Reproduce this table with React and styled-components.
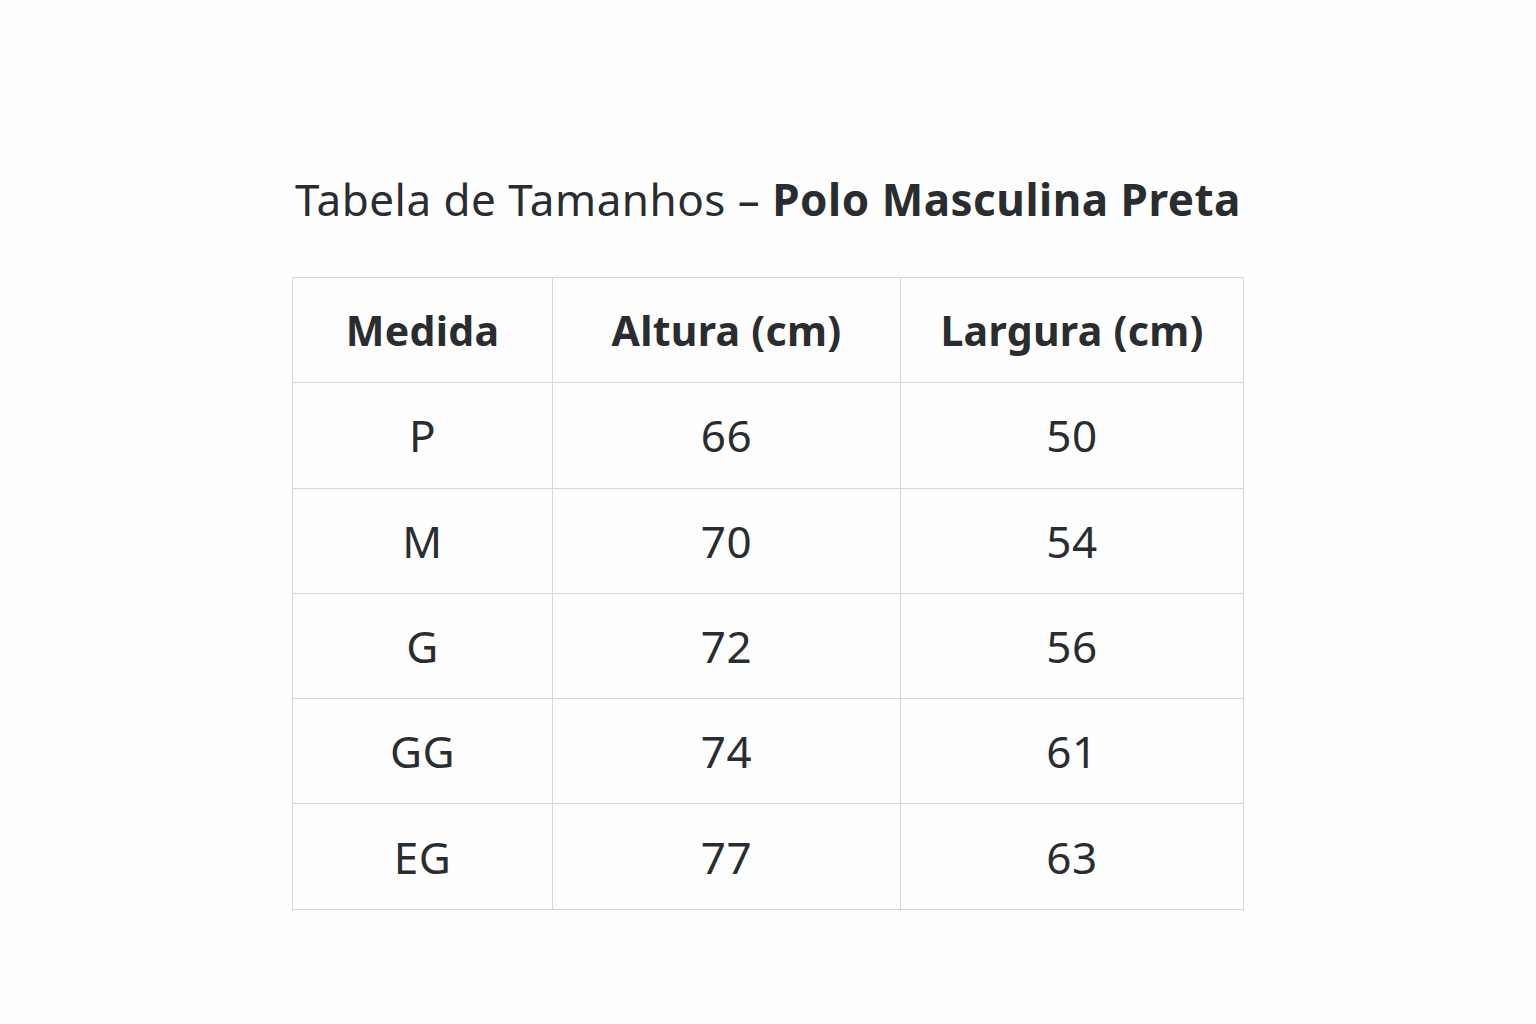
import React from 'react';
import styled, { createGlobalStyle } from 'styled-components';

const GlobalStyle = createGlobalStyle`
  html, body {
    margin: 0;
    padding: 0;
    background: #fefefe;
  }
  body {
    font-family: 'Noto Sans', 'Open Sans', sans-serif;
    color: #2a2d30;
  }
`;

const Page = styled.div`
  width: 1536px;
  height: 1024px;
  display: flex;
  flex-direction: column;
  align-items: center;
  padding-top: 169px;
  box-sizing: border-box;
`;

const Title = styled.h1`
  margin: 0 0 48px;
  height: 60px;
  line-height: 60px;
  font-size: 44px;
  font-weight: 400;
  letter-spacing: 0.5px;
  color: #2a2d30;

  strong {
    font-weight: 700;
  }
`;

const Table = styled.table`
  border-collapse: collapse;
  table-layout: fixed;
  width: 951px;
  border: 1px solid #d4d4d4;
`;

const Cell = styled.td`
  height: 104.3px;
  padding: 0;
  border: 1px solid #d6d6d6;
  text-align: center;
  vertical-align: middle;
  font-size: ${props => (props.head ? 41 : 44)}px;
  font-weight: ${props => (props.head ? 700 : 400)};
  letter-spacing: ${props => (props.head ? 0.3 : 0.5)}px;
  color: #2a2d30;
`;

const columns = [
  { label: 'Medida', width: 260 },
  { label: 'Altura (cm)', width: 348 },
  { label: 'Largura (cm)', width: 343 }
];

const rows = [
  ['P', '66', '50'],
  ['M', '70', '54'],
  ['G', '72', '56'],
  ['GG', '74', '61'],
  ['EG', '77', '63']
];

export default function App() {
  return (
    <>
      <GlobalStyle />
      <Page>
        <Title>
          Tabela de Tamanhos – <strong>Polo Masculina Preta</strong>
        </Title>
        <Table>
          <colgroup>
            {columns.map(col => (
              <col key={col.label} style={{ width: col.width }} />
            ))}
          </colgroup>
          <thead>
            <tr>
              {columns.map(col => (
                <Cell as="th" head key={col.label}>
                  {col.label}
                </Cell>
              ))}
            </tr>
          </thead>
          <tbody>
            {rows.map(row => (
              <tr key={row[0]}>
                {row.map((value, i) => (
                  <Cell key={i}>{value}</Cell>
                ))}
              </tr>
            ))}
          </tbody>
        </Table>
      </Page>
    </>
  );
}
